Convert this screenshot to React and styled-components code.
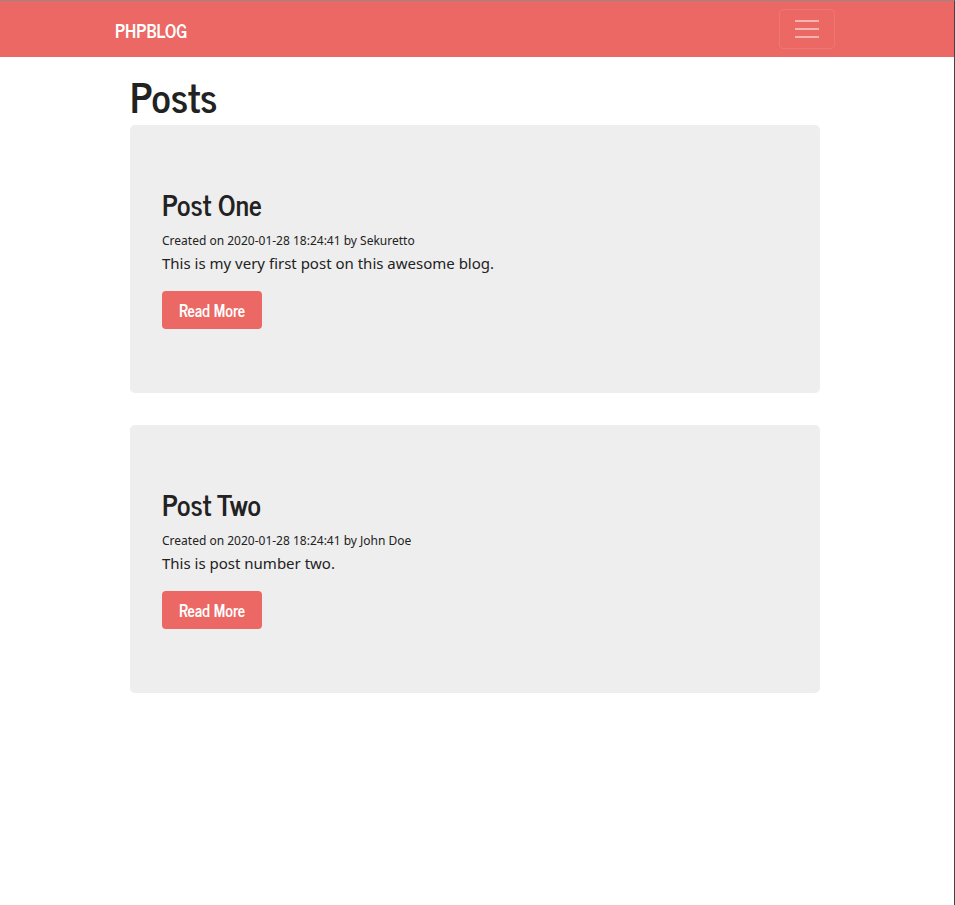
import React from "react";
import styled, { createGlobalStyle } from "styled-components";

const coral = "#eb6864";
const headingFont = `"News Cycle", "Liberation Sans Narrow", "Open Sans Condensed", "Roboto Condensed", Roboto, sans-serif`;
const bodyFont = `"Segoe UI", "Noto Sans", sans-serif`;

const GlobalStyle = createGlobalStyle`
  *, *::before, *::after { box-sizing: border-box; }
  body { margin: 0; background: #fff; color: #222; font: 400 15px/24px ${bodyFont}; }
`;

const Page = styled.div`
  min-height: 100vh;
  border-top: 1px solid #96858a;
  border-right: 1px solid #444;
`;

const Navbar = styled.nav`
  background: ${coral};
  padding: 8px 20px 8px 16px;
`;

const Container = styled.div`
  max-width: 720px;
  margin: 0 auto;
`;

const NavContent = styled(Container)`
  display: flex;
  align-items: center;
  justify-content: space-between;
`;

const Brand = styled.a`
  padding-top: 2px;
  color: #fff;
  font: 700 18px/28px ${headingFont};
  text-decoration: none;
`;

const Toggler = styled.button`
  display: flex;
  align-items: center;
  justify-content: center;
  width: 56px;
  height: 40px;
  padding: 0;
  background: transparent;
  border: 1px solid rgba(255, 255, 255, 0.1);
  border-radius: 4px;
`;

const Main = styled.main`
  padding: 16px 20px 16px 16px;
`;

const PostList = styled(Container)`
  padding: 0 15px;
`;

const PageTitle = styled.h1`
  margin: 0 0 6px;
  font: 700 40px/46px ${headingFont};
`;

const Post = styled.article`
  margin-bottom: 32px;
  padding: 64px 32px;
  background: #eee;
  border-radius: 5px;
`;

const PostTitle = styled.h2`
  margin: 0 0 10px;
  font: 700 28px/31px ${headingFont};
`;

const Meta = styled.small`
  display: block;
  font-size: 12px;
  line-height: 21px;
`;

const Body = styled.p`
  margin: 0 0 16px;
`;

const ReadMore = styled.a`
  display: inline-block;
  padding: 8px 17px;
  color: #fff;
  background: ${coral};
  border-radius: 4px;
  font: 700 16px/22px ${headingFont};
  text-decoration: none;
`;

const posts = [
  { title: "Post One", meta: "Created on 2020-01-28 18:24:41 by Sekuretto", body: "This is my very first post on this awesome blog." },
  { title: "Post Two", meta: "Created on 2020-01-28 18:24:41 by John Doe", body: "This is post number two." },
];

export default function App() {
  return (
    <Page>
      <GlobalStyle />
      <Navbar>
        <NavContent>
          <Brand href="#">PHPBLOG</Brand>
          <Toggler type="button" aria-label="Toggle navigation">
            <svg width="30" height="30" viewBox="0 0 30 30" fill="none" stroke="#fff" strokeOpacity="0.5" strokeWidth="2">
              <path d="M3 7h24M3 15h24M3 23h24" />
            </svg>
          </Toggler>
        </NavContent>
      </Navbar>
      <Main>
        <PostList>
          <PageTitle>Posts</PageTitle>
          {posts.map((post) => (
            <Post key={post.title}>
              <PostTitle>{post.title}</PostTitle>
              <Meta>{post.meta}</Meta>
              <Body>{post.body}</Body>
              <ReadMore href="#">Read More</ReadMore>
            </Post>
          ))}
        </PostList>
      </Main>
    </Page>
  );
}
